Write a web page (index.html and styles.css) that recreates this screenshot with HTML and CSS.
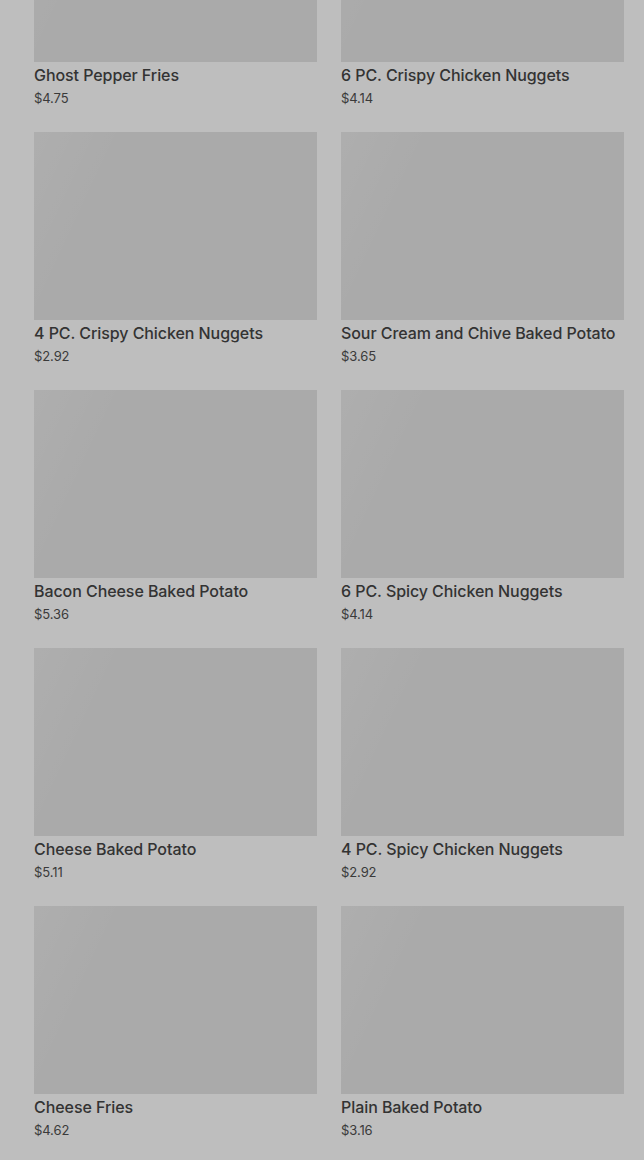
FILE: index.html
```html
<!DOCTYPE html>
<html lang="en">
<head>
    <meta charset="UTF-8">
    <meta name="viewport" content="width=device-width, initial-scale=1.0">
    <title>Menu</title>
    <link rel="stylesheet" href="styles.css">
</head>
<body>
    <div class="menu">
        <div class="item">
            <div class="item-image"></div>
            <div class="item-name">Ghost Pepper Fries</div>
            <div class="item-price">$4.75</div>
        </div>
        <div class="item">
            <div class="item-image"></div>
            <div class="item-name">6 PC. Crispy Chicken Nuggets</div>
            <div class="item-price">$4.14</div>
        </div>
        <div class="item">
            <div class="item-image"></div>
            <div class="item-name">4 PC. Crispy Chicken Nuggets</div>
            <div class="item-price">$2.92</div>
        </div>
        <div class="item">
            <div class="item-image"></div>
            <div class="item-name">Sour Cream and Chive Baked Potato</div>
            <div class="item-price">$3.65</div>
        </div>
        <div class="item">
            <div class="item-image"></div>
            <div class="item-name">Bacon Cheese Baked Potato</div>
            <div class="item-price">$5.36</div>
        </div>
        <div class="item">
            <div class="item-image"></div>
            <div class="item-name">6 PC. Spicy Chicken Nuggets</div>
            <div class="item-price">$4.14</div>
        </div>
        <div class="item">
            <div class="item-image"></div>
            <div class="item-name">Cheese Baked Potato</div>
            <div class="item-price">$5.11</div>
        </div>
        <div class="item">
            <div class="item-image"></div>
            <div class="item-name">4 PC. Spicy Chicken Nuggets</div>
            <div class="item-price">$2.92</div>
        </div>
        <div class="item">
            <div class="item-image"></div>
            <div class="item-name">Cheese Fries</div>
            <div class="item-price">$4.62</div>
        </div>
        <div class="item">
            <div class="item-image"></div>
            <div class="item-name">Plain Baked Potato</div>
            <div class="item-price">$3.16</div>
        </div>
    </div>
</body>
</html>
```

FILE: styles.css
```css
:root {
    --bg-color: #bebebe;
    --image-color: #aaaaaa;
    --text-color: #333;
    --price-color: #3a3a3a;
}

html, body {
    margin: 0;
    height: 100%;
    overflow: hidden;
}

body {
    font-family: Inter, "Noto Sans", sans-serif;
    background-color: var(--bg-color);
    color: var(--text-color);
}

/* page is scrolled down a bit, first row is cut at the top */
.menu {
    display: grid;
    grid-template-columns: 1fr 1fr;
    column-gap: 24px;
    row-gap: 24px;
    padding: 0 20px 0 34px;
    margin-top: -126px;
}

.item-image {
    height: 188px;
    background: linear-gradient(115deg, rgba(255, 255, 255, 0.05) 0%, rgba(255, 255, 255, 0) 25%), var(--image-color);
}

.item-name {
    font-size: 16px;
    font-weight: 500;
    line-height: 26px;
    letter-spacing: -0.07px;
    white-space: nowrap;
}

.item-price {
    font-size: 13px;
    line-height: 20px;
    letter-spacing: -0.1px;
    color: var(--price-color);
}
```
